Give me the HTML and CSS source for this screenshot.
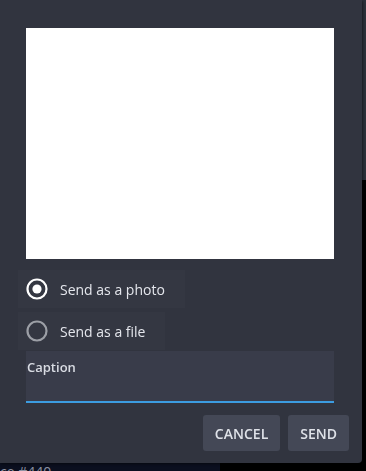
FILE: index.html
```html
<!DOCTYPE html>
<html lang="en">
  <head>
    <meta charset="UTF-8" />
    <meta name="viewport" content="width=device-width, initial-scale=1.0" />
    <title>Send image</title>
    <link rel="stylesheet" href="styles.css">
  </head>

  <body>
    <div class="page">
      <div class="page-header"></div>
      <div class="page-main"></div>
      <div class="page-status">ce #440</div>
    </div>

    <div class="dialog">
      <div class="preview"></div>

      <div class="options">
        <label class="option">
          <svg class="radio" width="22" height="22" viewBox="0 0 22 22">
            <circle cx="11" cy="11" r="9.5" fill="none" stroke="#ffffff" stroke-width="2.2" />
            <circle cx="11" cy="11" r="4.6" fill="#ffffff" />
          </svg>
          <span>Send as a photo</span>
        </label>
        <label class="option">
          <svg class="radio" width="22" height="22" viewBox="0 0 22 22">
            <circle cx="11" cy="11" r="9.5" fill="none" stroke="#9c9fa6" stroke-width="2.2" />
          </svg>
          <span>Send as a file</span>
        </label>
      </div>

      <div class="caption">
        <span class="caption-label">Caption</span>
      </div>

      <div class="actions">
        <button class="btn">CANCEL</button>
        <button class="btn">SEND</button>
      </div>
    </div>
  </body>
</html>
```

FILE: styles.css
```css
body {
  margin: 0;
  background-color: #000000;
  font-family: "Open Sans", "Noto Sans", sans-serif;
}

.page {
  height: 100vh;
  display: flex;
  flex-direction: column;
}

.page-header {
  height: 180px;
  background-color: #2d323c;
}

.page-main {
  flex: 1;
  background-color: #000000;
}

.page-status {
  width: 220px;
  height: 8px;
  overflow: hidden;
  background-color: #0b0f1f;
  color: #8d93a3;
  font-size: 14px;
  line-height: 18px;
}

.dialog {
  position: fixed;
  top: 0;
  left: 0;
  width: 362px;
  height: 463px;
  box-sizing: border-box;
  padding: 28px 28px 12px 26px;
  background-color: #31343f;
  border-radius: 0 0 4px 0;
  box-shadow: 1px 1px 3px rgba(0, 0, 0, 0.5);
  display: flex;
  flex-direction: column;
}

.preview {
  flex-shrink: 0;
  height: 231px;
  background-color: #ffffff;
}

.options {
  margin: 11px 0 1px -8px;
  display: flex;
  flex-direction: column;
  align-items: flex-start;
  gap: 4px;
}

.option {
  display: flex;
  align-items: center;
  gap: 12px;
  padding: 8px 20px 8px 8px;
  background-color: rgba(255, 255, 255, 0.015);
  color: #e4e6ec;
  font-size: 14px;
}

.radio {
  display: block;
}

.caption {
  flex-shrink: 0;
  height: 46px;
  padding: 4px 0 0 1px;
  background-color: #393c4a;
  border-bottom: 2px solid #3c9ce0;
}

.caption-label {
  color: #d9dce3;
  font-size: 13px;
  font-weight: 600;
}

.actions {
  margin: 12px -15px 0 0;
  display: flex;
  justify-content: flex-end;
  gap: 8px;
}

.btn {
  height: 36px;
  padding: 0 12px;
  border: none;
  border-radius: 3px;
  background-color: #444856;
  color: #dfe2e8;
  font-family: "Open Sans", "Noto Sans", sans-serif;
  font-size: 14px;
  font-weight: 600;
  cursor: pointer;
}
```
